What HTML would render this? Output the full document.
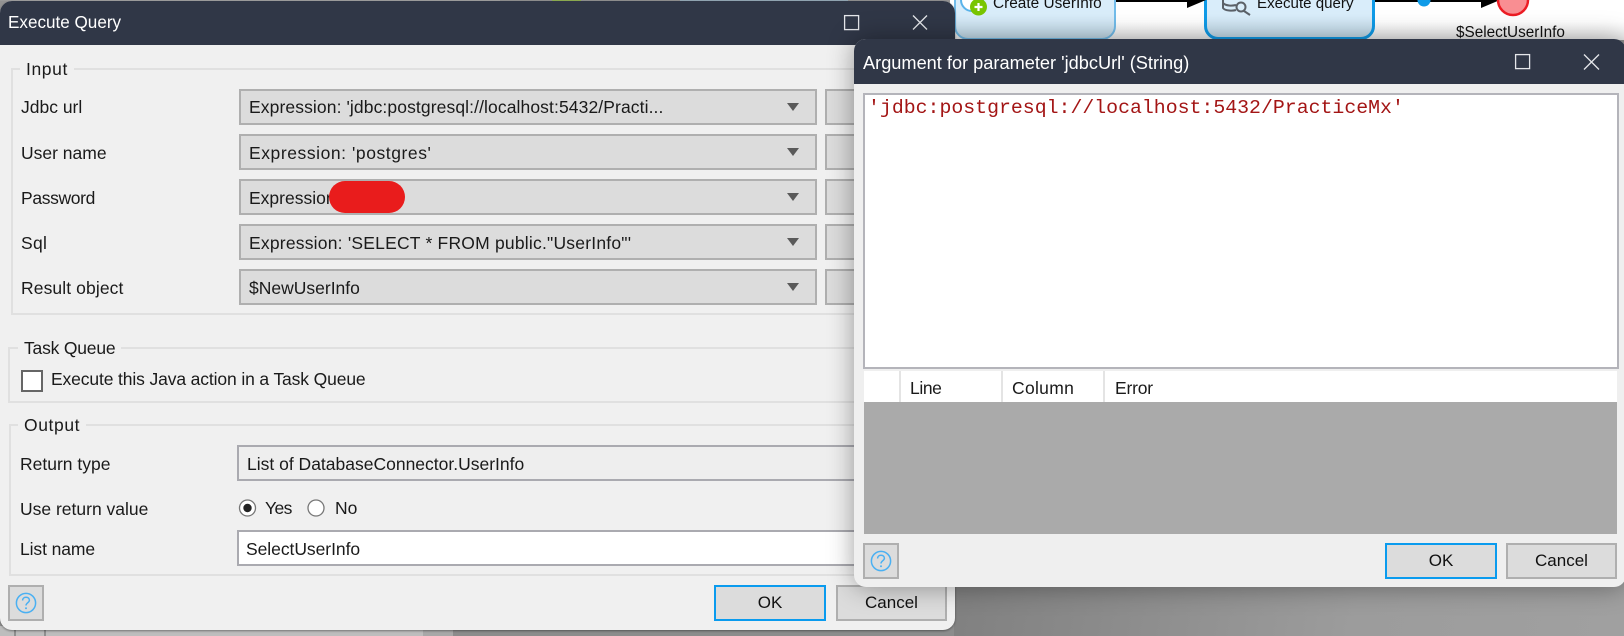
<!DOCTYPE html>
<html><head><meta charset="utf-8"><style>
html,body{margin:0;padding:0;width:1624px;height:636px;overflow:hidden;background:#929292}
*{box-sizing:border-box}
body{position:relative;font-family:"Liberation Sans",sans-serif;font-size:17.5px;color:#1a1a1a}
div,svg{position:absolute}
.t{line-height:24px;height:24px;white-space:nowrap}
.f{background:#dcdcdc;border:2.6px solid #afafaf}
.b{background:#dcdcdc;border:2.6px solid #afafaf;text-align:center;line-height:32px;color:#111;font-size:17px}
.ok{border-color:#0a9bee}
.g{border:2px solid #e0e0e0}
.l{background:#f0f0f0;padding:0 6px;line-height:24px;height:24px;white-space:nowrap}
.ar{width:0;height:0;border-left:6px solid transparent;border-right:6px solid transparent;border-top:8px solid #5a5a5a}
.w{color:#fff}
</style></head><body>
<!-- canvas top right -->
<div style="left:950px;top:0;width:674px;height:40px;background:linear-gradient(#fff 0,#fff 22px,#eee 40px)"></div>
<div style="left:954px;top:-20px;width:162px;height:60px;background:linear-gradient(#d9edfa 60%,#c3dbe9);border:2px solid #72bcea;border-radius:14px"></div>
<div style="left:1204px;top:-20px;width:171px;height:60px;background:linear-gradient(#d9edfa 60%,#c3dbe9);border:3px solid #0f9be8;border-radius:14px"></div>
<div style="left:1116px;top:0;width:75px;height:2px;background:#000"></div>
<div style="left:1375px;top:0;width:110px;height:2px;background:#000"></div>
<svg style="left:0;top:0" width="1624" height="40">
<path d="M1187 0H1206L1187 8Z" fill="#000"/><path d="M1481 0H1500L1481 8Z" fill="#000"/>
<circle cx="1424" cy="0" r="6.5" fill="#0f9be8"/>
<circle cx="1513" cy="0" r="15" fill="#f98e92" stroke="#ec1c24" stroke-width="2.5"/>
<circle cx="972" cy="0" r="11" fill="#fff" stroke="#59b3ea" stroke-width="2"/>
<circle cx="978.5" cy="7" r="8.5" fill="#79c500"/>
<path d="M978.5 3V11M974.5 7H982.5" stroke="#fff" stroke-width="2.2"/>
<g fill="none" stroke="#5b6168" stroke-width="2"><path d="M1223 -2V8C1225 11 1233 11 1236 10M1223 3C1226 6 1232 6 1236 5"/><circle cx="1241" cy="7" r="4.5"/><path d="M1244 11L1250 15"/></g>
</svg>
<div class="t" style="left:993px;top:-8px;font-size:15.4px;color:#111">Create UserInfo</div>
<div class="t" style="left:1257px;top:-8px;font-size:15.1px;color:#111">Execute query</div>
<div class="t" style="left:1456px;top:21px;font-size:15.3px;color:#111">$SelectUserInfo</div>

<!-- bottom strip -->
<div style="left:0;top:626px;width:423px;height:10px;background:#bdbdbd"></div>
<div style="left:423px;top:626px;width:30px;height:10px;background:#a8a8a8"></div>
<div style="left:453px;top:626px;width:501px;height:10px;background:#8c8c8c"></div>
<div style="left:14px;top:626px;width:2px;height:10px;background:#8e8e8e"></div>
<div style="left:44px;top:626px;width:2px;height:10px;background:#8e8e8e"></div>
<div style="left:954px;top:580px;width:670px;height:56px;background:linear-gradient(100deg,#808080,#9c9c9c 60%,#a0a0a0)"></div>

<!-- Dialog 1 -->
<div style="left:0;top:1px;width:955px;height:629px;background:#f0f0f0;border-radius:12px;box-shadow:0 1px 2px rgba(0,0,0,.4);overflow:hidden">
 <div style="left:0;top:0;width:955px;height:44px;background:#303747"></div>
</div>
<div style="left:0;top:0;width:500px;height:1px;background:#9a9a9a"></div>
<div style="left:552px;top:0;width:29px;height:1px;background:#8aa84f"></div>
<div style="left:680px;top:0;width:168px;height:1px;background:#8fa3b0"></div>
<div class="t w" style="left:8px;top:11px;font-size:17.1px">Execute Query</div>
<svg style="left:0;top:0" width="960" height="45" fill="none" stroke="#e4e6ea" stroke-width="1.3"><rect x="844.6" y="15.6" width="14" height="14"/><path d="M913 15.5L927 29.5M927 15.5L913 29.5"/></svg>

<!-- Input group -->
<div class="g" style="left:11px;top:68px;width:936px;height:247px"></div>
<div class="l" style="left:20px;top:57px;letter-spacing:.6px">Input</div>
<div class="t" style="left:21px;top:95px">Jdbc url</div>
<div class="t" style="left:21px;top:141px">User name</div>
<div class="t" style="left:21px;top:186px;letter-spacing:-.35px">Password</div>
<div class="t" style="left:21px;top:231px;letter-spacing:.3px">Sql</div>
<div class="t" style="left:21px;top:276px;letter-spacing:.1px">Result object</div>
<div class="f" style="left:239px;top:89px;width:578px;height:36px"></div>
<div class="f" style="left:239px;top:134px;width:578px;height:36px"></div>
<div class="f" style="left:239px;top:179px;width:578px;height:36px"></div>
<div class="f" style="left:239px;top:224px;width:578px;height:36px"></div>
<div class="f" style="left:239px;top:269px;width:578px;height:36px"></div>
<div class="f" style="left:825px;top:89px;width:60px;height:36px"></div>
<div class="f" style="left:825px;top:134px;width:60px;height:36px"></div>
<div class="f" style="left:825px;top:179px;width:60px;height:36px"></div>
<div class="f" style="left:825px;top:224px;width:60px;height:36px"></div>
<div class="f" style="left:825px;top:269px;width:60px;height:36px"></div>
<div class="t" style="left:249px;top:95px;letter-spacing:.1px">Expression: 'jdbc:postgresql://localhost:5432/Practi...</div>
<div class="t" style="left:249px;top:141px;letter-spacing:.56px">Expression: 'postgres'</div>
<div class="t" style="left:249px;top:186px">Expression</div>
<div style="left:329px;top:181px;width:76px;height:32px;background:#e91c1c;border-radius:16px"></div>
<div class="t" style="left:249px;top:231px;letter-spacing:.21px">Expression: 'SELECT * FROM public."UserInfo"'</div>
<div class="t" style="left:249px;top:276px">$NewUserInfo</div>
<div class="ar" style="left:787px;top:103px"></div>
<div class="ar" style="left:787px;top:148px"></div>
<div class="ar" style="left:787px;top:193px"></div>
<div class="ar" style="left:787px;top:238px"></div>
<div class="ar" style="left:787px;top:283px"></div>

<!-- Task queue -->
<div class="g" style="left:8px;top:347px;width:938px;height:56px"></div>
<div class="l" style="left:18px;top:336px;letter-spacing:-.2px">Task Queue</div>
<div style="left:21px;top:370px;width:22px;height:22px;background:#fff;border:2px solid #666"></div>
<div class="t" style="left:51px;top:367px;letter-spacing:-.13px">Execute this Java action in a Task Queue</div>

<!-- Output -->
<div class="g" style="left:9px;top:424px;width:937px;height:152px"></div>
<div class="l" style="left:18px;top:413px;letter-spacing:.6px">Output</div>
<div class="t" style="left:20px;top:452px">Return type</div>
<div class="t" style="left:20px;top:497px">Use return value</div>
<div class="t" style="left:20px;top:537px;letter-spacing:-.1px">List name</div>
<div class="f" style="left:237px;top:445px;width:650px;height:36px;background:#eee;border-color:#aaaab0"></div>
<div class="t" style="left:247px;top:452px">List of DatabaseConnector.UserInfo</div>
<svg style="left:235px;top:495px" width="100" height="26"><circle cx="12.5" cy="13" r="8" fill="#fff" stroke="#777" stroke-width="1.3"/><circle cx="12.5" cy="13" r="4.2" fill="#222"/><circle cx="81" cy="13" r="8" fill="#fff" stroke="#777" stroke-width="1.3"/></svg>
<div class="t" style="left:265px;top:496px;letter-spacing:-.6px">Yes</div>
<div class="t" style="left:335px;top:496px">No</div>
<div class="f" style="left:237px;top:530px;width:650px;height:36px;background:#fff;border-color:#aaaab0"></div>
<div class="t" style="left:246px;top:537px;letter-spacing:-.05px">SelectUserInfo</div>

<!-- Dialog 1 footer -->
<div class="b" style="left:8px;top:585px;width:36px;height:36px"></div>
<svg style="left:14px;top:591px" width="24" height="24" fill="none" stroke="#4ab0f2" stroke-width="1.5"><circle cx="12" cy="12" r="9.6"/><path d="M8.6 9.5C8.6 7.5 10 6.3 12 6.3C14 6.3 15.4 7.5 15.4 9.3C15.4 11.5 12 12 12 14.5"/><circle cx="12" cy="17.3" r="1" fill="#4ab0f2" stroke="none"/></svg>
<div class="b ok" style="left:714px;top:585px;width:112px;height:36px">OK</div>
<div class="b" style="left:836px;top:585px;width:111px;height:36px">Cancel</div>

<!-- Dialog 2 -->
<div style="left:854px;top:39px;width:772px;height:548px;background:#efefef;border-radius:12px 12px 12px 12px;box-shadow:0 0 26px rgba(0,0,0,.38);overflow:hidden">
 <div style="left:0;top:0;width:772px;height:45px;background:#303747"></div>
</div>
<div class="t w" style="left:863px;top:51px;font-size:18.2px">Argument for parameter 'jdbcUrl' (String)</div>
<svg style="left:1500px;top:45px" width="124" height="35" fill="none" stroke="#e4e6ea" stroke-width="1.3"><rect x="15.6" y="9.6" width="14" height="14"/><path d="M84 9.5L99 24.5M99 9.5L84 24.5"/></svg>
<div style="left:863px;top:93px;width:756px;height:276px;background:#fff;border:2px solid #b4b4ba"></div>
<div style="left:868px;top:96px;line-height:24px;height:24px;white-space:nowrap;font-family:'Liberation Mono',monospace;font-size:19.85px;color:#a31515">'jdbc:postgresql://localhost:5432/PracticeMx'</div>
<div style="left:864px;top:371px;width:753px;height:31px;background:#fff"></div>
<div style="left:899px;top:371px;width:2px;height:33px;background:#e4e4e4"></div>
<div style="left:1001px;top:371px;width:2px;height:33px;background:#e4e4e4"></div>
<div style="left:1103px;top:371px;width:2px;height:33px;background:#e4e4e4"></div>
<div class="t" style="left:910px;top:376px;letter-spacing:-.4px">Line</div>
<div class="t" style="left:1012px;top:376px;letter-spacing:.3px">Column</div>
<div class="t" style="left:1115px;top:376px;letter-spacing:-.2px">Error</div>
<div style="left:864px;top:402px;width:753px;height:132px;background:#aaaaaa"></div>
<div class="b" style="left:863px;top:543px;width:36px;height:36px"></div>
<svg style="left:869px;top:549px" width="24" height="24" fill="none" stroke="#4ab0f2" stroke-width="1.5"><circle cx="12" cy="12" r="9.6"/><path d="M8.6 9.5C8.6 7.5 10 6.3 12 6.3C14 6.3 15.4 7.5 15.4 9.3C15.4 11.5 12 12 12 14.5"/><circle cx="12" cy="17.3" r="1" fill="#4ab0f2" stroke="none"/></svg>
<div class="b ok" style="left:1385px;top:543px;width:112px;height:36px">OK</div>
<div class="b" style="left:1506px;top:543px;width:111px;height:36px">Cancel</div>
</body></html>
